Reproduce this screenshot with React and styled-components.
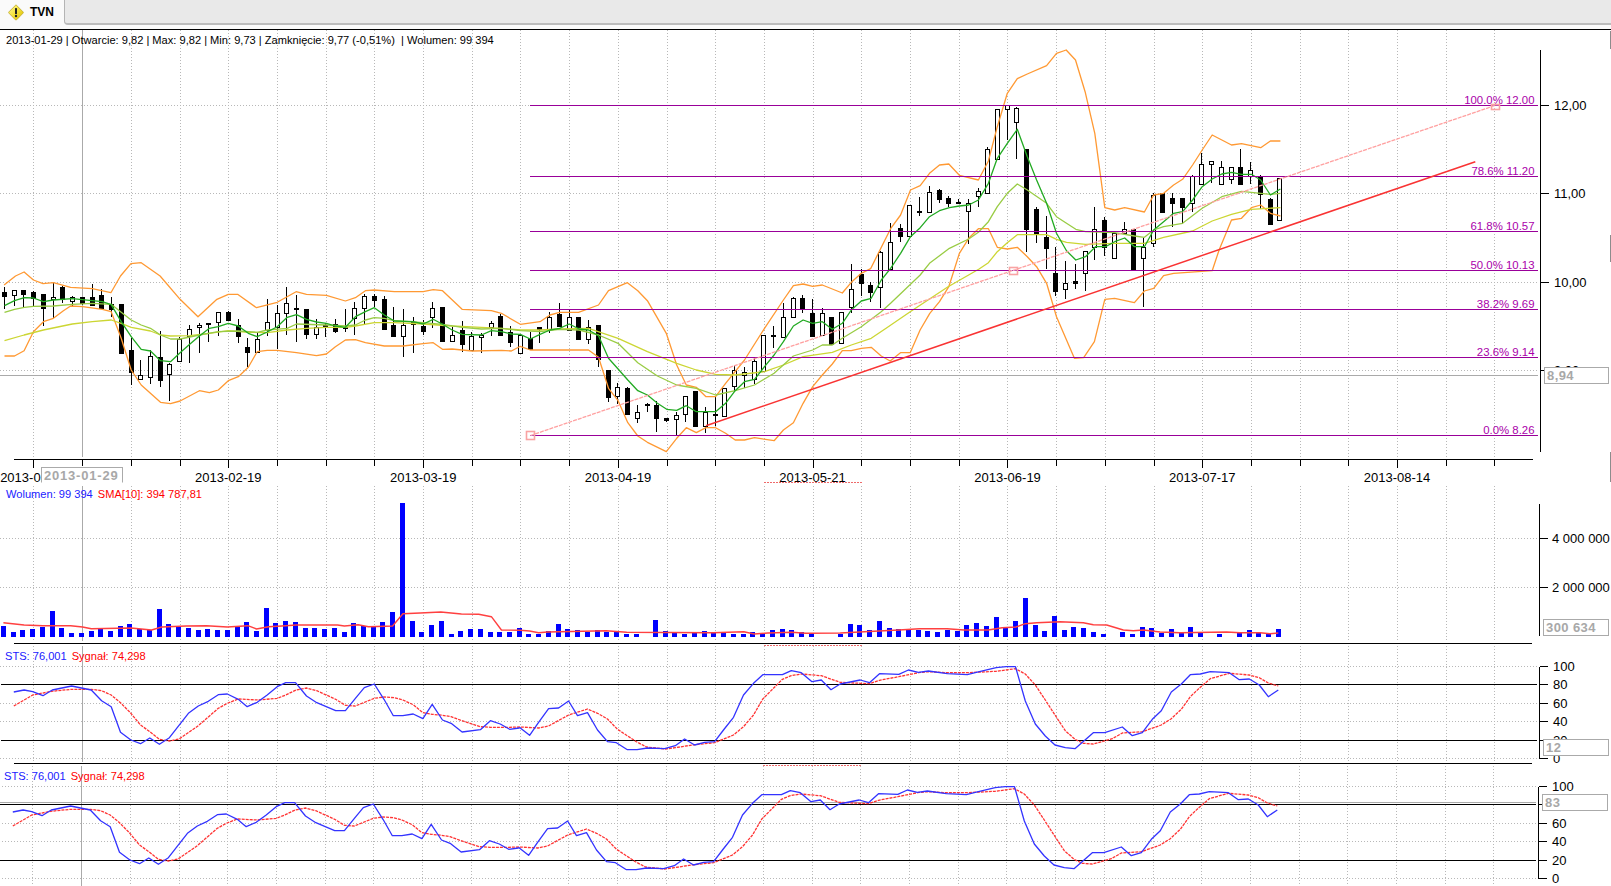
import React from "react";
import styled, { createGlobalStyle } from "styled-components";

const GlobalStyle = createGlobalStyle`
  html, body { margin: 0; padding: 0; background: #fff; overflow: hidden; }
  body { font-family: "Liberation Sans", Arial, sans-serif; }
`;

/* ---- coordinate frames of the measured data ---- */
const F = {
  z1: { x: 0, sx: 2.904, y: 0, sy: 3 },
  z2: { x: 0, sx: 2.904, y: 270, sy: 3 },
  z3: { x: 520, sx: 2.904, y: 270, sy: 3 },
  z4: { x: 800, sx: 2.904, y: 30, sy: 3 },
  z7: { x: 0, sx: 2.904, y: 480, sy: 3 },
  z8: { x: 520, sx: 2.904, y: 480, sy: 3 },
  z9: { x: 960, sx: 3, y: 480, sy: 3 },
};
const seg = (f, s) =>
  s.trim().split(/\s+/).map((p) => {
    const [a, b] = p.split(",").map(Number);
    return `${(f.x + a / f.sx).toFixed(1)},${(f.y + b / f.sy).toFixed(1)}`;
  }).join(" ");
const join = (...parts) => parts.join(" ");

const upper = join(
  seg(F.z1, "12,855 45,828 70,816 97,840 125,851 155,848 205,862 268,866 322,878 350,828 380,791 410,788 465,828 523,898"),
  seg(F.z2, "575,140 630,88 663,73 690,73 745,113 805,97 860,65 890,73 948,76 1003,93 1032,83 1061,62 1087,60 1145,65 1229,65 1258,59 1285,62 1342,118 1427,122 1456,130 1511,163"),
  seg(F.z3, "58,155 87,135 115,127 170,127 228,105 257,62 312,38 342,62 370,92 425,190 455,285 483,345 512,352 540,380 568,380 597,340 652,270 710,175 765,90 794,47 822,42 850,49 878,45 936,69"),
  seg(F.z4, "149,757 178,730 205,716 263,596 292,555 321,480 349,467 376,430 405,405 432,402 463,436 518,450 547,393 573,290 602,190 631,146 660,132 716,107 745,70 773,60 800,90 828,185 856,310 885,533 914,540 943,533 1000,546 1027,495 1056,490 1085,465 1111,448 1140,405 1168,360 1197,315 1253,345 1282,341 1338,353 1366,333 1395,333")
);
const lower = join(
  seg(F.z2, "13,258 42,258 70,242 97,185 126,155 155,145 184,122 205,108 240,110 297,118 323,125 352,205 381,300 410,345 466,397 495,401 523,393 579,362 608,368 634,360 663,332 692,320 721,292 747,245 776,241 805,241 861,248 919,257 948,252 974,230 1003,210 1032,209 1061,218 1116,228 1171,228 1229,221 1258,218 1285,238 1313,237 1371,243 1456,241 1485,243 1511,229"),
  seg(F.z3, "30,240 143,240 199,240 228,262 257,355 285,392 313,458 342,498 370,517 425,545 455,505 483,473 512,488 540,473 568,473 597,490 625,510 652,510 681,503 738,512 765,480 794,458 822,400 850,350 878,315 907,282 936,242 962,242 991,235 1020,232 1049,258 1075,273 1105,248 1133,248 1162,180 1190,130"),
  seg(F.z4, "405,815 432,770 463,670 490,625 518,596 547,596 573,652 602,657 631,652 660,680 687,710 716,760 745,860 797,985 824,983 855,935 885,808 914,805 971,818 1000,783 1027,775 1056,737 1085,730 1197,722 1217,660 1253,570 1282,565 1311,533 1338,525 1366,550 1395,558")
);
const green = join(
  seg(F.z2, "13,107 42,92 71,83 97,84 126,95 155,90 210,86 268,92 297,95 323,104 352,155 381,200 410,238 437,243 466,272 495,275 523,248 551,223 579,198 608,175 634,170 663,160 692,168 721,190 747,200 776,186 805,170 834,142 861,134 890,148 919,156 948,160 974,168 1003,172 1032,140 1061,125 1087,113 1116,135 1145,153 1200,155 1229,162 1258,148 1285,163 1313,180 1342,193 1398,195 1427,182 1456,185 1485,192 1511,193"),
  seg(F.z3, "30,207 58,193 87,180 115,175 143,162 172,177 199,180 228,197 257,265 285,297 313,330 342,362 370,375 399,400 426,418 455,421 483,407 512,425 540,425 568,425 597,400 625,362 652,335 681,328 710,290 738,255 765,215 794,168 822,150 850,160 878,155 907,178 936,160 962,120 991,93 1020,85"),
  seg(F.z4, "236,750 263,715 292,670 321,620 349,593 376,560 405,542 434,533 463,528 490,525 518,510 547,460 573,385 602,340 631,298 660,380 687,450 716,520 745,610 774,662 801,690 829,680 858,650 887,650 914,635 943,624 971,650 1000,650 1027,600 1056,575 1085,550 1111,545 1140,510 1168,470 1197,447 1225,432 1253,427 1282,433 1311,433 1338,450 1366,495 1395,477")
);
const lime = join(
  seg(F.z2, "13,127 42,118 71,112 97,109 155,108 210,103 268,100 323,103 352,127 381,150 410,165 437,175 466,195 495,207 523,207 579,195 634,185 692,183 747,187 776,180 834,175 861,162 948,165 1003,168 1032,165 1061,150 1087,143 1116,145 1145,152 1229,158 1285,163 1342,172 1398,177 1456,175 1511,182"),
  seg(F.z3, "58,185 115,178 172,180 228,195 285,220 342,278 399,318 455,345 512,355 568,375 625,362 681,345 738,310 794,258 850,240 878,225 907,225 936,205 991,170 1049,125"),
  seg(F.z4, "263,820 349,735 376,700 434,655 490,627 518,607 547,575 573,530 602,490 631,462 660,480 716,520 745,560 774,580 801,598 829,605 914,608 971,618 1000,622 1027,600 1056,590 1111,580 1168,535 1225,500 1282,484 1338,490 1366,493 1395,490")
);
const yellow = join(
  seg(F.z2, "13,212 70,195 126,180 210,162 268,155 323,150 352,160 381,172 437,183 466,195 495,198 551,197 608,190 663,182 721,187 776,188 834,180 890,175 948,172 1003,172 1032,168 1087,158 1145,158 1229,162 1313,168 1398,172 1456,175 1511,180"),
  seg(F.z3, "58,180 115,177 199,175 285,205 370,245 455,280 512,300 568,313 625,315 710,305 765,285 822,260 907,247 962,225 1020,205"),
  seg(F.z4, "250,895 320,845 430,770 520,717 547,698 573,665 602,638 631,614 716,614 745,628 774,637 829,643 914,640 1000,640 1056,622 1140,603 1197,573 1253,553 1310,538 1395,533")
);
const sma = join(
  seg(F.z7, "10,428 70,435 125,437 205,437 240,441 265,446 380,444 440,450 470,441 540,438 600,437 660,441 720,437 745,447 780,440 830,437 860,435 980,435 1000,438 1040,434 1070,440 1140,438 1170,401 1220,399 1280,396 1340,402 1390,403 1427,410 1456,450 1510,451"),
  seg(F.z8, "0,451 28,453 54,458 80,456 250,452 310,457 560,458 650,455 680,462 720,459 790,457 830,460 930,459 1000,455 1100,450 1160,446 1240,446 1290,450 1360,450 1400,443 1440,441"),
  seg(F.z9, "196,431 230,428 300,425 370,428 400,434 440,435 490,450 520,452 550,450 600,456 660,458 800,456 840,458 900,458 930,461 955,459")
);
const stsBlue = join(
  seg(F.z7, "40,636 70,630 95,635 125,647 152,630 208,618 265,630 295,662 323,680 350,757 380,780 408,791 435,774 463,793 492,773 547,700 576,678 605,664 634,644 660,642 692,658 718,680 747,667 776,645 805,620 830,608 858,608 890,648 920,668 975,692 1003,692 1032,655 1058,623 1087,612 1115,658 1142,707 1170,707 1200,702 1228,716 1255,673 1285,720 1310,730 1342,756 1395,749 1424,722 1453,732 1480,748 1508,744"),
  seg(F.z8, "0,743 28,766 54,727 83,686 112,684 141,663 167,707 196,698 225,750 254,785 280,788 312,809 340,809 370,804 420,806 451,797 478,777 507,795 536,787 565,785 591,750 620,712 649,645 678,610 705,584 762,584 788,572 817,578 848,605 875,600 903,629 930,612 988,600 1015,608 1044,581 1100,583 1128,570 1157,577 1186,573 1241,581 1299,584 1325,577 1383,563 1412,560 1439,560"),
  seg(F.z9, "196,663 226,732 256,768 285,795 316,803 345,806 400,758 434,758 487,741 517,767 547,758 577,718 604,692 634,636 664,612 691,584 721,582 751,575 808,578 838,599 868,597 898,615 925,650 955,630")
);
const stsRed = join(
  seg(F.z7, "40,678 95,645 150,634 208,628 265,628 295,632 323,645 350,668 380,700 408,735 435,755 463,778 492,783 520,777 576,737 634,685 660,670 692,657 750,660 805,655 830,645 860,630 890,624 920,632 975,658 1003,676 1032,678 1087,655 1115,651 1145,653 1170,660 1200,674 1228,698 1255,703 1285,706 1310,710 1342,722 1395,740 1424,742 1480,742"),
  seg(F.z8, "0,741 54,744 83,738 141,705 196,687 225,700 254,717 283,748 338,785 367,801 423,807 451,803 507,794 565,788 620,765 649,740 678,705 705,657 762,598 788,587 817,582 875,587 930,607 988,610 1015,611 1044,601 1100,590 1157,578 1186,575 1241,578 1299,578 1383,574 1439,566"),
  seg(F.z9, "196,582 226,615 256,660 285,705 316,752 345,778 370,790 400,792 457,776 487,759 547,755 604,735 634,716 664,688 691,650 721,622 751,596 808,580 868,585 898,593 925,609 955,618")
);

/* hi, top, bottom, lo, filled */
const candlesA = [
  [52,66,78,116,1],[60,61,74,108,0],[60,61,72,110,1],[63,66,85,112,1],[72,72,113,168,1],[38,82,88,145,0],[48,52,86,100,1],[78,82,92,108,0],[82,82,100,106,1],[42,82,105,108,1],
  [58,75,113,115,1],[82,103,116,140,1],[102,102,248,248,1],[205,240,305,345,1],[270,314,328,330,0],[240,258,322,342,0],[184,262,330,350,1],[280,283,311,393,0],[200,208,272,275,0],[165,178,197,278,0],
  [160,166,172,248,0],[160,160,163,216,1],[127,127,155,197,0],[122,127,150,150,1],[148,165,197,220,1],[205,232,245,292,1],[187,208,247,250,0],[88,157,181,198,0],[105,130,172,238,0],[52,100,130,195,0],
  [75,115,118,215,1],[118,118,193,206,1],[148,170,193,206,0],[158,166,169,200,1],[148,163,182,190,1],[118,171,173,185,1],[96,115,143,195,0],[72,79,115,165,0],[72,79,90,110,1],[78,88,177,177,1],
  [110,165,197,197,1],[118,164,197,260,0],[142,155,163,250,0],[150,168,183,195,1],[97,115,140,175,0],[112,112,213,217,1],[172,196,212,212,0],[153,180,222,245,1],[185,198,240,240,0],[190,196,202,248,0],
  [153,160,170,197,0],[132,138,194,195,1],[168,186,216,230,1],[193,196,248,248,0],[185,205,237,237,1],
  [170,172,177,218,1],[127,142,178,190,0],[100,132,168,168,1],[120,142,181,181,0],[142,142,206,206,1],[150,170,206,221,0],[165,165,268,290,1],[300,300,380,395,1],[340,350,377,403,0],[350,355,431,431,1],
  [405,425,445,458,0],[398,403,405,425,1],[393,404,445,485,1],[445,445,450,455,1],[425,434,448,495,0],[379,379,433,455,0],[364,364,467,467,1],[411,425,467,488,0],[380,431,433,467,1],[355,355,437,437,0],
  [285,300,349,365,0],[292,305,315,355,0],[262,273,328,342,0],[196,196,302,302,0],[168,196,199,235,1],[100,142,200,200,0],[80,85,142,142,0],[75,85,117,128,1],[87,129,197,197,1],[114,130,196,196,0],
  [141,141,221,221,1],[127,127,220,220,0],
].map((c) => [c[0] / 3 + 270, c[1] / 3 + 270, c[2] / 3 + 270, c[3] / 3 + 270, c[4]]);
const candlesB = [
  [702,778,832,850,0],[718,732,758,798,1],[757,765,785,815,1],[663,665,772,833,0],[580,637,716,716,0],[582,595,618,636,1],[526,526,617,622,0],[502,543,545,557,1],[468,487,545,545,0],[478,480,507,518,1],
  [498,505,518,532,1],[507,515,518,518,1],[508,520,542,643,0],[475,484,499,530,0],[352,358,490,490,0],[238,238,386,386,0],[226,226,238,330,0],[232,234,277,386,0],[358,358,596,665,1],[532,538,611,638,1],
  [558,622,653,716,1],[652,730,782,797,1],[693,758,778,806,0],[702,754,758,778,1],[664,664,730,782,0],[532,596,650,690,0],[562,571,650,678,1],[610,610,685,685,0],[577,596,610,610,0],[597,597,716,724,1],
  [625,650,685,830,0],[490,496,640,650,0],[490,490,545,545,1],[490,504,518,592,1],[505,505,530,582,1],[436,438,520,545,0],[370,403,463,463,0],[392,392,403,460,0],[392,412,463,463,0],[410,412,448,462,0],
  [358,412,461,461,1],[397,421,437,462,0],[434,437,491,538,1],[505,507,582,584,1],[443,445,571,571,0],
].map((c) => [c[0] / 3 + 30, c[1] / 3 + 30, c[2] / 3 + 30, c[3] / 3 + 30, c[4]]);
const candles = [...candlesA, ...candlesB];

const volumeTops = [
  438,456,450,447,441,393,444,459,459,453,444,453,438,432,447,450,387,432,438,444,
  450,447,450,450,438,426,453,384,429,423,426,444,444,447,444,456,429,438,438,426,
  396,69,423,456,435,423,462,453,447,447,456,456,456,444,462,462,453,432,447,450,
  456,450,456,456,462,462,0,420,453,459,462,459,453,456,456,462,462,456,462,450,
  447,450,456,459,0,0,462,432,435,450,423,444,447,447,450,453,456,450,453,435,
  429,438,411,444,423,354,435,453,408,450,441,444,456,462,0,456,462,441,444,459,
  447,459,441,456,0,462,0,456,450,459,462,447,
];

const gridXs = Array.from({ length: 31 }, (_, k) => Math.round(33.4 + 48.7 * k) + 0.5);
const crossX = 82.5;

const fibs = [
  { y: 105.5, label: "100.0% 12.00", ty: 104 },
  { y: 176.5, label: "78.6% 11.20", ty: 175 },
  { y: 231.5, label: "61.8% 10.57", ty: 230 },
  { y: 270.5, label: "50.0% 10.13", ty: 269 },
  { y: 309.5, label: "38.2% 9.69", ty: 308 },
  { y: 357.5, label: "23.6% 9.14", ty: 356 },
  { y: 435.5, label: "0.0% 8.26", ty: 434 },
];
const priceTicks = [
  { y: 105.5, t: "12,00" },
  { y: 193.5, t: "11,00" },
  { y: 282.5, t: "10,00" },
  { y: 370.5, t: "9,00" },
];
const dates = [
  { x: 33.4, t: "2013-01-18" },
  { x: 228.3, t: "2013-02-19" },
  { x: 423.2, t: "2013-03-19" },
  { x: 618, t: "2013-04-19" },
  { x: 812.5, t: "2013-05-21" },
  { x: 1007.6, t: "2013-06-19" },
  { x: 1202.3, t: "2013-07-17" },
  { x: 1397, t: "2013-08-14" },
];
const stochTicks = [
  { y: 666.5, t: "100" },
  { y: 684.5, t: "80" },
  { y: 703.5, t: "60" },
  { y: 721.5, t: "40" },
  { y: 740.5, t: "20" },
  { y: 758.5, t: "0" },
];

/* ---- styled parts ---- */
const Page = styled.div`
  width: 1611px;
  height: 886px;
  display: flex;
  flex-direction: column;
  overflow: hidden;
  background: #fff;
`;
const TabBar = styled.div`
  height: 29px;
  flex: none;
  display: flex;
  background: #fafafa;
  border-bottom: 1px solid #000;
`;
const Tab = styled.div`
  width: 64px;
  flex: none;
  display: flex;
  align-items: flex-start;
  gap: 6px;
  padding: 4px 0 0 8px;
  box-sizing: border-box;
  font-size: 12px;
  font-weight: 700;
  line-height: 17px;
  color: #000;
`;
const TabFiller = styled.div`
  flex: 1;
  height: 25px;
  box-sizing: border-box;
  background: #e9e9e9;
  border-left: 1px solid #b4b4b4;
  border-bottom: 2px solid #bcbcbc;
  border-bottom-left-radius: 4px;
`;
const Panel = styled.section`
  position: relative;
  flex: none;
  width: 1611px;
  height: ${(p) => p.$h}px;
  overflow: hidden;
`;
const Plot = styled.svg`
  display: block;
  width: 1611px;
  height: 100%;
`;
const Legend = styled.div`
  position: absolute;
  left: ${(p) => p.$left}px;
  top: ${(p) => p.$top}px;
  display: flex;
  gap: ${(p) => p.$gap ?? 5}px;
  font-size: 11.1px;
  line-height: 14px;
  white-space: pre;
  color: #000;
`;
const LegendPart = styled.span`
  color: ${(p) => p.$color};
`;
const ValueBox = styled.div`
  position: absolute;
  left: ${(p) => p.$left}px;
  top: ${(p) => p.$top}px;
  width: ${(p) => p.$width}px;
  height: ${(p) => p.$height || 16}px;
  box-sizing: border-box;
  padding: 1px 0 0 2px;
  background: #fff;
  border: 1px solid #aaa;
  border-bottom-color: ${(p) => (p.$open ? "#fff" : "#aaa")};
  color: #a8a8a8;
  font-size: 13px;
  font-weight: 700;
  line-height: 14px;
  letter-spacing: ${(p) => p.$track || 0.4}px;
  white-space: pre;
`;
const GridLine = styled.line`
  stroke: #b8b8b8;
  stroke-width: 1;
  stroke-dasharray: 1 2;
  shape-rendering: crispEdges;
`;
const SolidLine = styled.line`
  stroke: ${(p) => p.$color || "#000"};
  stroke-width: 1;
  shape-rendering: crispEdges;
`;
const PinkDash = styled.line`
  stroke: #ee6a6a;
  stroke-width: 1;
  stroke-dasharray: 2 1;
  shape-rendering: crispEdges;
`;
const Curve = styled.polyline`
  fill: none;
  stroke: ${(p) => p.$color};
  stroke-width: ${(p) => p.$w || 1.3}px;
  stroke-linejoin: round;
  ${(p) => (p.$dash ? `stroke-dasharray: ${p.$dash};` : "")}
`;
const Wick = styled.line`
  stroke: #000;
  stroke-width: 1;
  shape-rendering: crispEdges;
`;
const Body = styled.rect`
  fill: ${(p) => (p.$filled ? "#000" : "#fff")};
  stroke: #000;
  stroke-width: 1;
  shape-rendering: crispEdges;
`;
const Bar = styled.rect`
  fill: #0000ff;
  shape-rendering: crispEdges;
`;
const Handle = styled.rect`
  fill: #fff;
  fill-opacity: 0.2;
  stroke: #f9a3a3;
  stroke-width: 1.6;
`;
const TrendLine = styled.line`
  stroke: ${(p) => p.$color};
  stroke-width: ${(p) => p.$w}px;
  ${(p) => (p.$dash ? `stroke-dasharray: ${p.$dash};` : "")}
`;
const AxisLabel = styled.text`
  font-family: "Liberation Sans", Arial, sans-serif;
  font-size: 13px;
  fill: #000;
`;
const FibLabel = styled.text`
  font-family: "Liberation Sans", Arial, sans-serif;
  font-size: 11.4px;
  fill: #aa00aa;
  text-anchor: end;
`;
const EdgeStrip = styled.rect`
  fill: #8c8c8c;
`;

const AlertIcon = () => (
  <svg width="16" height="17" viewBox="0 0 16 17">
    <defs>
      <linearGradient id="alertFill" x1="0" y1="0" x2="1" y2="1">
        <stop offset="0" stopColor="#fff9a0" />
        <stop offset="0.5" stopColor="#f4e23a" />
        <stop offset="1" stopColor="#d9b800" />
      </linearGradient>
    </defs>
    <path d="M8 0.8 L15.2 8 Q15.5 8.5 15.2 9 L8.6 15.8 Q8 16.2 7.4 15.8 L0.8 9 Q0.5 8.5 0.8 8 Z" fill="url(#alertFill)" stroke="#c0a928" strokeWidth="0.8" />
    <rect x="7" y="4" width="2" height="6" rx="0.6" fill="#222" />
    <circle cx="8" cy="12" r="1.2" fill="#222" />
  </svg>
);

const VGrid = ({ y1, y2 }) =>
  gridXs.map((x) => <GridLine key={x} x1={x} x2={x} y1={y1} y2={y2} />);

const Candles = () =>
  candles.map((c, i) => {
    const cx = Math.floor(4.5 + 9.735 * i) + 0.5;
    const top = Math.round(c[1]) + 0.5;
    const h = Math.max(1, Math.round(c[2]) - Math.round(c[1]));
    return (
      <g key={i}>
        <Wick x1={cx} x2={cx} y1={Math.round(c[0])} y2={Math.round(c[3])} />
        <Body x={cx - 2} y={top} width={4} height={h} $filled={c[4] === 1} />
      </g>
    );
  });

const PricePanel = () => (
  <Panel $h={456}>
    <Plot viewBox="0 30 1611 456">
      <VGrid y1={30} y2={459} />
      {priceTicks.map((t) => (
        <GridLine key={t.y} x1={0} x2={1538} y1={t.y} y2={t.y} />
      ))}
      <SolidLine $color="#aaa" x1={crossX} x2={crossX} y1={30} y2={457} />
      <SolidLine $color="#aaa" x1={0} x2={1538} y1={375.5} y2={375.5} />
      <Candles />
      <Curve $color="#ff9933" points={upper} />
      <Curve $color="#ff9933" points={lower} />
      <Curve $color="#ccd633" points={yellow} />
      <Curve $color="#99cc44" points={lime} />
      <Curve $color="#22aa22" points={green} />
      {fibs.map((f) => (
        <g key={f.y}>
          <SolidLine $color="#990099" x1={530} x2={1538} y1={f.y} y2={f.y} />
          <FibLabel x={1534.5} y={f.ty}>{f.label}</FibLabel>
        </g>
      ))}
      <TrendLine $color="#ffa0a0" $w={1.3} $dash="4 1" x1={530.5} y1={435.5} x2={1495} y2={105.5} />
      <Handle x={526.5} y={431.5} width={8} height={8} />
      <Handle x={1009.5} y={267.5} width={8} height={7} />
      <Handle x={1491.5} y={104.5} width={8} height={5} />
      <TrendLine $color="#f93333" $w={1.5} x1={706} y1={425.7} x2={1475.3} y2={161.7} />
      <SolidLine x1={1540.5} x2={1540.5} y1={50} y2={452} />
      {priceTicks.map((t) => (
        <g key={t.y}>
          <SolidLine x1={1541} x2={1549} y1={t.y} y2={t.y} />
          <AxisLabel x={1554} y={t.y + 4.5}>{t.t}</AxisLabel>
        </g>
      ))}
      <SolidLine x1={14} x2={1533} y1={459.5} y2={459.5} />
      {gridXs.map((x, k) => (
        <SolidLine key={x} x1={x} x2={x} y1={460} y2={k % 4 === 0 && k < 29 ? 468 : 466} />
      ))}
      {dates.map((d) => (
        <AxisLabel key={d.t} x={d.x} y={482} textAnchor="middle">{d.t}</AxisLabel>
      ))}
      <PinkDash x1={763.5} x2={861.5} y1={482.5} y2={482.5} />
      <EdgeStrip x={1610} y={31} width={1} height={18} />
      <EdgeStrip x={1610} y={235} width={1} height={27} />
      <EdgeStrip x={1610} y={452} width={1} height={30} />
    </Plot>
    <Legend $left={6} $top={3} $gap={0}>
      2013-01-29 | Otwarcie: 9,82 | Max: 9,82 | Min: 9,73 | Zamknięcie: 9,77 (-0,51%)  | Wolumen: 99 394
    </Legend>
    <ValueBox $left={41} $top={437} $width={82} $height={16} $open $track={0.8}>2013-01-29</ValueBox>
    <ValueBox $left={1544} $top={337} $width={65} $height={17}>8,94</ValueBox>
  </Panel>
);

const VolumePanel = () => (
  <Panel $h={158}>
    <Plot viewBox="0 486 1611 158">
      <VGrid y1={486} y2={642} />
      <GridLine x1={0} x2={1538} y1={538.5} y2={538.5} />
      <GridLine x1={0} x2={1538} y1={587.5} y2={587.5} />
      <SolidLine $color="#aaa" x1={crossX} x2={crossX} y1={486} y2={641} />
      {volumeTops.map((t, i) =>
        t ? (
          <Bar key={i} x={Math.round(0.94 + 9.732 * i)} y={Math.round(480 + t / 3)} width={5} height={637 - Math.round(480 + t / 3)} />
        ) : null
      )}
      <Curve $color="#ff4040" $w={1.4} points={sma} />
      <SolidLine x1={14} x2={1532} y1={643.5} y2={643.5} />
      <SolidLine x1={1539.5} x2={1539.5} y1={504} y2={636} />
      <SolidLine x1={1540} x2={1548} y1={538.5} y2={538.5} />
      <SolidLine x1={1540} x2={1548} y1={587.5} y2={587.5} />
      <AxisLabel x={1552} y={543}>4 000 000</AxisLabel>
      <AxisLabel x={1552} y={592}>2 000 000</AxisLabel>
    </Plot>
    <Legend $left={6} $top={1}>
      <LegendPart $color="#2020ff">Wolumen: 99 394</LegendPart>
      <LegendPart $color="#ff0000">SMA[10]: 394 787,81</LegendPart>
    </Legend>
    <ValueBox $left={1543} $top={133} $width={66} $height={17}>300 634</ValueBox>
  </Panel>
);

const StochPanel = ({ h, shift, value, boxLeft, boxTop, legendLeft, crossLine, separator }) => (
  <Panel $h={h}>
    <Plot viewBox={`${shift} 644 1611 ${h}`}>
      <VGrid y1={646} y2={separator ? 762 : 770} />
      {[666.5, 703.5, 721.5, 758.5].map((y) => (
        <GridLine key={y} x1={0} x2={1537} y1={y} y2={y} />
      ))}
      <SolidLine $color="#aaa" x1={crossX} x2={crossX} y1={646} y2={separator ? 762 : 770} />
      {crossLine && <SolidLine $color="#aaa" x1={1} x2={1537} y1={682.5} y2={682.5} />}
      <PinkDash x1={763.5} x2={861.5} y1={645.5} y2={645.5} />
      <SolidLine x1={1} x2={1537} y1={684.5} y2={684.5} />
      <SolidLine x1={1} x2={1537} y1={740.5} y2={740.5} />
      <Curve $color="#ff3333" $dash="3 1" points={stsRed} />
      <Curve $color="#3333ff" points={stsBlue} />
      {separator && <SolidLine x1={14} x2={1532} y1={763.5} y2={763.5} />}
      <SolidLine x1={1539.5} x2={1539.5} y1={666.5} y2={758.5} />
      {stochTicks.map((t) => (
        <g key={t.y}>
          <SolidLine x1={1540} x2={1548} y1={t.y} y2={t.y} />
          <AxisLabel x={1553} y={t.y + 4.5}>{t.t}</AxisLabel>
        </g>
      ))}
    </Plot>
    <Legend $left={legendLeft} $top={5}>
      <LegendPart $color="#2020ff">STS: 76,001</LegendPart>
      <LegendPart $color="#ff0000">Sygnał: 74,298</LegendPart>
    </Legend>
    <ValueBox $left={boxLeft} $top={boxTop} $width={66} $height={17}>{value}</ValueBox>
  </Panel>
);

export default function App() {
  return (
    <Page>
      <GlobalStyle />
      <TabBar>
        <Tab>
          <AlertIcon />
          TVN
        </Tab>
        <TabFiller />
      </TabBar>
      <PricePanel />
      <VolumePanel />
      <StochPanel h={120} shift={0} value="12" boxLeft={1543} boxTop={95} legendLeft={5} separator />
      <StochPanel h={122} shift={1} value="83" boxLeft={1542} boxTop={30} legendLeft={4} crossLine />
    </Page>
  );
}
